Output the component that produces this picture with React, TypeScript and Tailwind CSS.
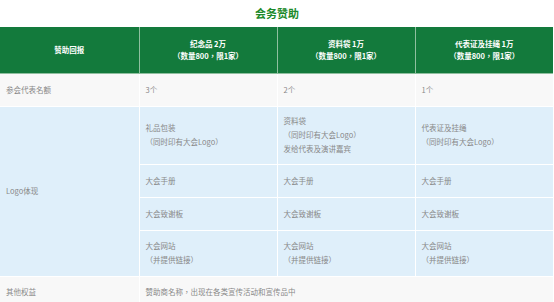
import React from "react";

const font = { fontFamily: '"Noto Sans CJK TC", "Noto Sans CJK SC", "Noto Sans", sans-serif' };

const cell = "border border-white px-[6px] align-middle text-left text-[7.5px] leading-[14px] text-[#888]";

export default function App() {
  return (
    <div className="w-[554px] h-[302px] overflow-hidden bg-white" style={font}>
      <div className="h-[27px] flex items-center justify-center text-[11px] font-bold text-[#1c8a2a]">
        会务赞助
      </div>
      <table className="w-[553px] table-fixed border-collapse">
        <colgroup>
          <col className="w-[139px]" />
          <col className="w-[138px]" />
          <col className="w-[138px]" />
          <col className="w-[138px]" />
        </colgroup>
        <thead>
          <tr className="h-[46px] bg-[#137a3c] text-white text-[7.5px] leading-[12px] font-bold">
            <th className="border border-[#8fbf9f] border-t-0 border-l-0 font-bold">赞助回报</th>
            <th className="border border-[#8fbf9f] border-t-0 font-bold">
              纪念品 2万
              <br />（数量800，限1家）
            </th>
            <th className="border border-[#8fbf9f] border-t-0 font-bold">
              资料袋 1万
              <br />（数量800，限1家）
            </th>
            <th className="border border-[#8fbf9f] border-t-0 border-r-0 font-bold">
              代表证及挂绳 1万
              <br />（数量800，限1家）
            </th>
          </tr>
        </thead>
        <tbody>
          <tr className="h-[33px] bg-[#f8f8f8]">
            <td className={cell + " border-l-0"}>参会代表名额</td>
            <td className={cell}>3个</td>
            <td className={cell}>2个</td>
            <td className={cell + " border-r-0"}>1个</td>
          </tr>
          <tr className="h-[58px] bg-[#dfeffa]">
            <td rowSpan={4} className={cell + " border-l-0"}>Logo体现</td>
            <td className={cell}>
              礼品包装
              <br />（同时印有大会Logo）
            </td>
            <td className={cell}>
              资料袋
              <br />（同时印有大会Logo）
              <br />发给代表及演讲嘉宾
            </td>
            <td className={cell + " border-r-0"}>
              代表证及挂绳
              <br />（同时印有大会Logo）
            </td>
          </tr>
          <tr className="h-[33px] bg-[#dfeffa]">
            <td className={cell}>大会手册</td>
            <td className={cell}>大会手册</td>
            <td className={cell + " border-r-0"}>大会手册</td>
          </tr>
          <tr className="h-[33px] bg-[#dfeffa]">
            <td className={cell}>大会致谢板</td>
            <td className={cell}>大会致谢板</td>
            <td className={cell + " border-r-0"}>大会致谢板</td>
          </tr>
          <tr className="h-[46px] bg-[#dfeffa]">
            <td className={cell}>
              大会网站
              <br />（并提供链接）
            </td>
            <td className={cell}>
              大会网站
              <br />（并提供链接）
            </td>
            <td className={cell + " border-r-0"}>
              大会网站
              <br />（并提供链接）
            </td>
          </tr>
          <tr className="h-[31px] bg-[#f8f8f8]">
            <td className={cell + " border-l-0"}>其他权益</td>
            <td colSpan={3} className={cell + " border-r-0"}>
              赞助商名称，出现在各类宣传活动和宣传品中
            </td>
          </tr>
        </tbody>
      </table>
    </div>
  );
}
